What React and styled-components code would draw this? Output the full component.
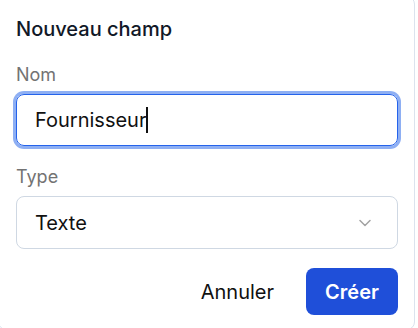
import styled, { createGlobalStyle } from 'styled-components';

const GlobalStyle = createGlobalStyle`
	html, body {
		margin: 0;
		padding: 0;
		background: #ffffff;
		font-family: Inter, "Noto Sans", sans-serif;
		overflow: hidden;
	}
`;

const Card = styled.div`
	box-sizing: border-box;
	width: 417px;
	margin: -4px 0 0 -2px;
	padding: 19px 16px 14px 17px;
	background: #ffffff;
	border: 1px solid #dbe3ee;
	border-radius: 8px;
	display: flex;
	flex-direction: column;
`;

const Title = styled.h2`
	margin: 0 0 22px;
	font-size: 20px;
	line-height: 26px;
	font-weight: 500;
	color: #111827;
`;

const Field = styled.div`
	display: flex;
	flex-direction: column;
	gap: 8px;
	margin-bottom: ${(p) => p.$gap || 0}px;
`;

const Label = styled.label`
	font-size: 18px;
	line-height: 22px;
	color: #737373;
`;

const Input = styled.div`
	box-sizing: border-box;
	height: 52px;
	display: flex;
	align-items: center;
	padding: 0 18px;
	border: 1px solid #2563eb;
	border-radius: 8px;
	box-shadow: 0 0 0 3px #8eaff3;
	font-size: 20px;
	color: #111111;
`;

const Caret = styled.span`
	display: inline-block;
	width: 2px;
	height: 26px;
	background: #111111;
`;

const Select = styled.div`
	box-sizing: border-box;
	height: 53px;
	display: flex;
	align-items: center;
	justify-content: space-between;
	padding: 0 26px 0 18px;
	border: 1px solid #cfd8e3;
	border-radius: 8px;
	font-size: 20px;
	color: #111111;
`;

const Actions = styled.div`
	display: flex;
	justify-content: flex-end;
	align-items: center;
	gap: 16px;
`;

const GhostButton = styled.button`
	border: none;
	background: transparent;
	font-family: inherit;
	font-size: 20px;
	font-weight: 400;
	color: #111111;
	padding: 0 16px;
	height: 47px;
`;

const PrimaryButton = styled.button`
	border: none;
	background: #1f4fd9;
	font-family: inherit;
	font-size: 20px;
	font-weight: 600;
	color: #ffffff;
	width: 92px;
	height: 47px;
	border-radius: 8px;
`;

const Chevron = () => (
	<svg width="12" height="8" viewBox="0 0 12 8" fill="none">
		<path d="M1 1.5l5 5 5-5" stroke="#a3a3a3" strokeWidth="1.5" strokeLinecap="round" strokeLinejoin="round" />
	</svg>
);

export default function App() {
	return (
		<>
			<GlobalStyle />
			<Card>
				<Title>Nouveau champ</Title>
				<Field $gap={20}>
					<Label>Nom</Label>
					<Input>
						Fournisseur
						<Caret />
					</Input>
				</Field>
				<Field $gap={19}>
					<Label>Type</Label>
					<Select>
						Texte
						<Chevron />
					</Select>
				</Field>
				<Actions>
					<GhostButton>Annuler</GhostButton>
					<PrimaryButton>Créer</PrimaryButton>
				</Actions>
			</Card>
		</>
	);
}
